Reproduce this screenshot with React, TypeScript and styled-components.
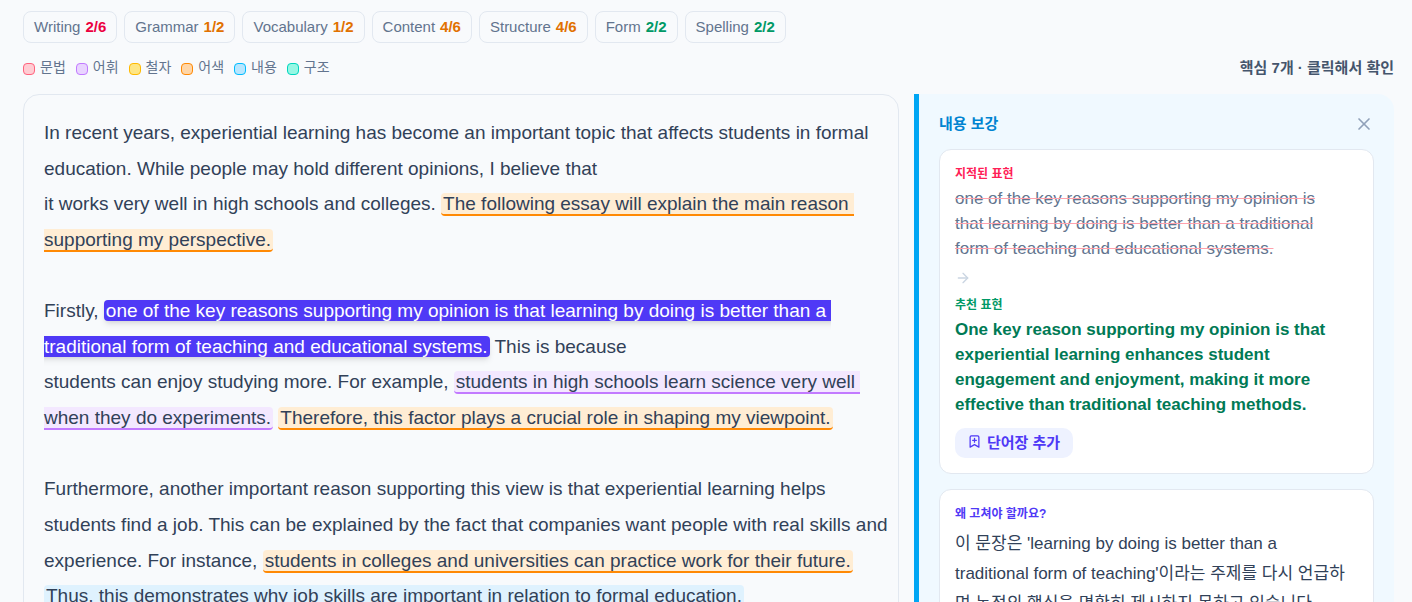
import React, { useState } from "react";
import styled, { createGlobalStyle } from "styled-components";
import { ArrowRight, BookmarkPlus, X } from "lucide-react";

const GlobalStyle = createGlobalStyle`
  *, *::before, *::after { box-sizing: border-box; }
  body {
    margin: 0;
    background: #f8fafc;
    color: #314158;
    font-family: "Liberation Sans", "Noto Sans CJK KR", sans-serif;
  }
  p, h2, h3, ul { margin: 0; padding: 0; }
`;

const Page = styled.div`
  height: 100vh;
  overflow: hidden;
  padding: 11px 18px 0 23px;
`;

const ScoreList = styled.ul`
  display: flex;
  flex-wrap: wrap;
  gap: 7px;
  list-style: none;
`;

const ScoreChip = styled.li`
  height: 32px;
  display: flex;
  align-items: center;
  gap: 5px;
  padding: 0 10px 2px;
  border: 1px solid #e2e8f0;
  border-radius: 8px;
  color: #62748e;
  font-size: 15px;
  white-space: nowrap;
`;

const Score = styled.strong<{ $color: string }>`
  color: ${(p) => p.$color};
`;

const LegendRow = styled.div`
  display: flex;
  align-items: center;
  justify-content: space-between;
  height: 20px;
  margin: 15px 0 16px;
`;

const Legend = styled.ul`
  display: flex;
  gap: 10px;
  padding-bottom: 2px;
  list-style: none;
`;

const LegendItem = styled.li`
  display: flex;
  align-items: center;
  gap: 5px;
  color: #62748e;
  font-size: 14px;
  line-height: 20px;
`;

const Swatch = styled.span<{ $fill: string; $line: string }>`
  width: 12px;
  height: 12px;
  margin-top: 4px;
  border: 1px solid ${(p) => p.$line};
  border-radius: 4px;
  background: ${(p) => p.$fill};
`;

const Hint = styled.p`
  color: #45556c;
  font-size: 15px;
  font-weight: 700;
  line-height: 22px;
`;

const Columns = styled.main`
  display: grid;
  grid-template-columns: minmax(0, 1fr) 480px;
  gap: 15px;
`;

const Essay = styled.article`
  padding: 20px 8px 20px 20px;
  border: 1px solid #e2e8f0;
  border-radius: 16px;
  font-size: 19px;
  line-height: 1.875;
  white-space: pre-wrap;
`;

const tones = {
  orange: ["#ffedd4", "#ff8904"],
  purple: ["#f3e8ff", "#c27aff"],
  sky: ["#dff2fe", "#00bcff"],
};

const Mark = styled.mark<{ $tone: keyof typeof tones }>`
  padding: 0 2px;
  border-bottom: 2px solid ${(p) => tones[p.$tone][1]};
  border-radius: 4px;
  background: ${(p) => tones[p.$tone][0]};
  color: inherit;
  cursor: pointer;
`;

const ActiveMark = styled.mark`
  padding: 0 2px;
  border-radius: 4px;
  background: #4f39f6;
  box-shadow: 0 4px 6px -1px rgba(0, 0, 0, 0.1), 0 2px 4px -2px rgba(0, 0, 0, 0.1);
  color: #fff;
  cursor: pointer;
`;

const Detail = styled.aside`
  padding: 20px;
  border-left: 5px solid #00a6f4;
  border-radius: 0 16px 16px 0;
  background: #f0f9ff;
`;

const DetailHeader = styled.header`
  display: flex;
  align-items: center;
  justify-content: space-between;
  height: 20px;
  margin-bottom: 15px;
`;

const DetailTitle = styled.h2`
  color: #0084d1;
  font-size: 15px;
  line-height: 20px;
`;

const CloseButton = styled.button`
  display: flex;
  padding: 0;
  border: 0;
  background: none;
  color: #90a1b9;
  cursor: pointer;
`;

const Card = styled.section`
  padding: 16px 27px 15px 15px;
  border: 1px solid #e2e8f0;
  border-radius: 12px;
  background: #fff;
  & + & { margin-top: 15px; }
`;

const Label = styled.h3<{ $color: string }>`
  margin-bottom: 4px;
  color: ${(p) => p.$color};
  font-size: 12px;
  line-height: 16px;
`;

const Original = styled.p`
  color: #62748e;
  font-size: 17px;
  line-height: 25px;
  text-decoration: line-through;
  text-decoration-color: #ffa1ad;
`;

const Arrow = styled(ArrowRight)`
  display: block;
  margin: 9px 0 11px;
  color: #cad5e2;
`;

const Suggestion = styled.p`
  color: #007a55;
  font-size: 17px;
  font-weight: 700;
  line-height: 25px;
`;

const AddButton = styled.button`
  display: inline-flex;
  align-items: center;
  gap: 5px;
  height: 30px;
  margin-top: 11px;
  padding: 0 13px 3px 12px;
  border: 0;
  border-radius: 10px;
  background: #eef2ff;
  color: #4f39f6;
  font: inherit;
  font-size: 15px;
  font-weight: 700;
  vertical-align: top;
  cursor: pointer;
`;

const Reason = styled.p`
  margin-top: 7px;
  font-size: 17px;
  line-height: 30px;
`;

const scores = [
  ["Writing", "2/6", "#ec003f"],
  ["Grammar", "1/2", "#e17100"],
  ["Vocabulary", "1/2", "#e17100"],
  ["Content", "4/6", "#e17100"],
  ["Structure", "4/6", "#e17100"],
  ["Form", "2/2", "#009966"],
  ["Spelling", "2/2", "#009966"],
];

const legend = [
  ["문법", "#ffccd3", "#ff637e"],
  ["어휘", "#e9d4ff", "#c27aff"],
  ["철자", "#fee685", "#ffb900"],
  ["어색", "#ffd6a7", "#ff8904"],
  ["내용", "#b8e6fe", "#00bcff"],
  ["구조", "#96f7e4", "#00d5be"],
];

export default function App() {
  const [open, setOpen] = useState(true);

  return (
    <>
      <GlobalStyle />
      <Page>
        <ScoreList>
          {scores.map(([name, score, color]) => (
            <ScoreChip key={name}>
              {name} <Score $color={color}>{score}</Score>
            </ScoreChip>
          ))}
        </ScoreList>
        <LegendRow>
          <Legend>
            {legend.map(([name, fill, line]) => (
              <LegendItem key={name}>
                <Swatch $fill={fill} $line={line} />
                {name}
              </LegendItem>
            ))}
          </Legend>
          <Hint>핵심 7개 · 클릭해서 확인</Hint>
        </LegendRow>
        <Columns>
          <Essay>
            {"In recent years, experiential learning has become an important topic that affects students in formal education. While people may hold different opinions, I believe that\nit works very well in high schools and colleges. "}
            <Mark $tone="orange">The following essay will explain the main reason supporting my perspective.</Mark>
            {"\n\nFirstly, "}
            <ActiveMark onClick={() => setOpen(true)}>
              one of the key reasons supporting my opinion is that learning by doing is better than a traditional form of teaching and educational systems.
            </ActiveMark>
            {" This is because\nstudents can enjoy studying more. For example, "}
            <Mark $tone="purple">students in high schools learn science very well when they do experiments.</Mark>{" "}
            <Mark $tone="orange">Therefore, this factor plays a crucial role in shaping my viewpoint.</Mark>
            {"\n\nFurthermore, another important reason supporting this view is that experiential learning helps students find a job. This can be explained by the fact that companies want people with real skills and experience. For instance, "}
            <Mark $tone="orange">students in colleges and universities can practice work for their future.</Mark>{" "}
            <Mark $tone="sky">Thus, this demonstrates why job skills are important in relation to formal education.</Mark>
          </Essay>
          {open && (
            <Detail>
              <DetailHeader>
                <DetailTitle>내용 보강</DetailTitle>
                <CloseButton aria-label="닫기" onClick={() => setOpen(false)}>
                  <X size={20} strokeWidth={2} />
                </CloseButton>
              </DetailHeader>
              <Card>
                <Label $color="#ff2056">지적된 표현</Label>
                <Original>
                  one of the key reasons supporting my opinion is that learning by doing is better than a traditional form of teaching and educational systems.
                </Original>
                <Arrow size={16} strokeWidth={2} />
                <Label $color="#009966">추천 표현</Label>
                <Suggestion>
                  One key reason supporting my opinion is that experiential learning enhances student engagement and enjoyment, making it more effective than traditional teaching methods.
                </Suggestion>
                <AddButton>
                  <BookmarkPlus size={15} strokeWidth={2} />
                  단어장 추가
                </AddButton>
              </Card>
              <Card>
                <Label $color="#4f39f6">왜 고쳐야 할까요?</Label>
                <Reason>
                  이 문장은 'learning by doing is better than a traditional form of teaching'이라는 주제를 다시 언급하며 논점의 핵심을 명확히 제시하지 못하고 있습니다.
                </Reason>
              </Card>
            </Detail>
          )}
        </Columns>
      </Page>
    </>
  );
}
